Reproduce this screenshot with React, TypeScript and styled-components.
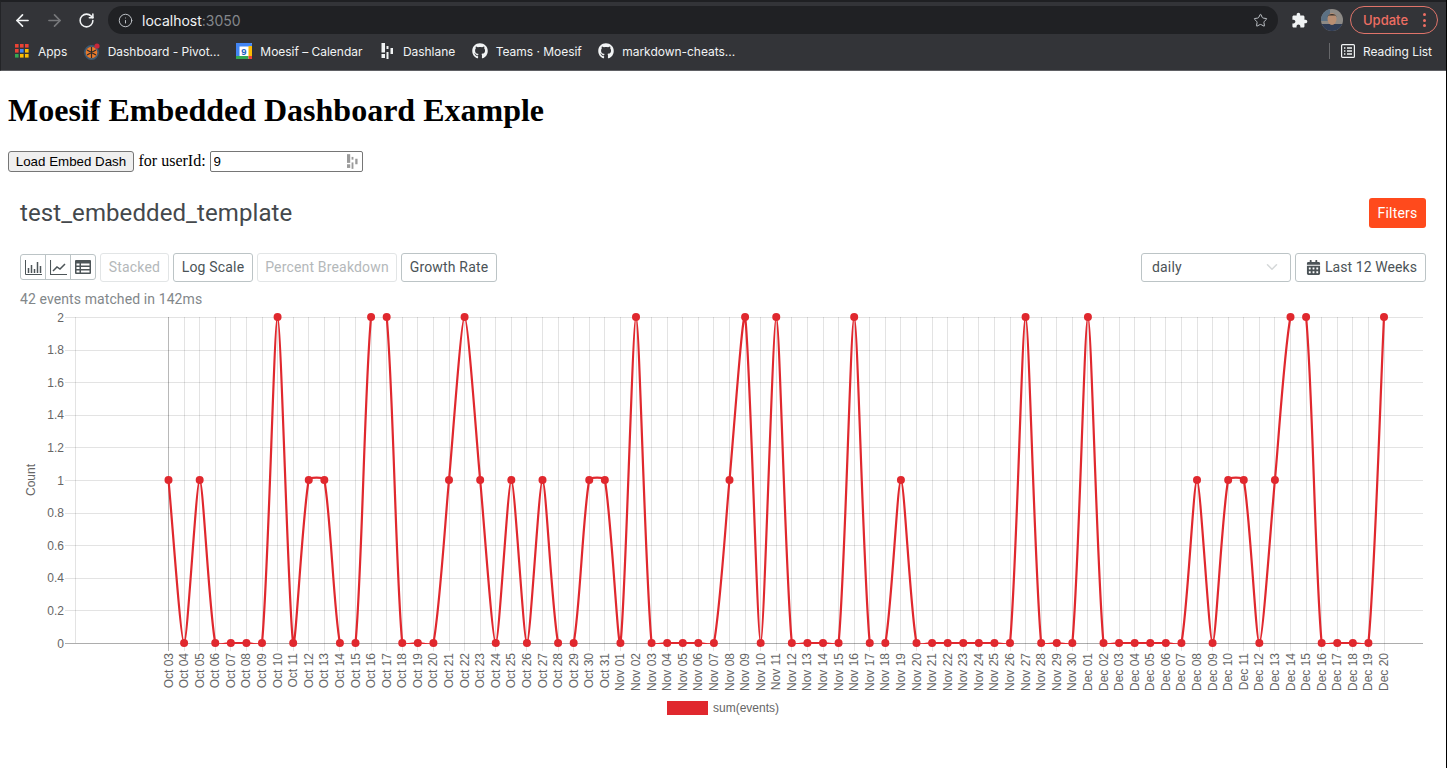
import React from 'react';
import styled, { createGlobalStyle } from 'styled-components';
import { ArrowLeft, ArrowRight, RotateCw, Info, Star, ChevronDown } from 'lucide-react';
import { FaGithub, FaCalendarAlt } from 'react-icons/fa';

const Global = createGlobalStyle`
  html, body { margin: 0; padding: 0; background: #fff; }
  #root { width: 1447px; height: 768px; overflow: hidden; }
`;

const Win = styled.div`
  width: 1447px;
  height: 768px;
  box-sizing: border-box;
  border-right: 1px solid #000;
  overflow: hidden;
`;

const Chrome = styled.header`
  height: 71px;
  box-sizing: border-box;
  background: #333438;
  border-top: 2px solid #1f2023;
  border-bottom: 1px solid #5f6064;
  border-left: 1px solid #232427;
  font-family: Inter, 'Liberation Sans', sans-serif;
  color: #f1f3f4;
`;

const Toolbar = styled.div`
  height: 32px;
  padding-top: 4px;
  box-sizing: border-box;
  display: flex;
  align-items: center;
  padding-left: 11px;
  padding-right: 8px;
`;

const NavBtn = styled.span<{ $dim?: boolean }>`
  width: 20px;
  height: 20px;
  margin-right: 12px;
  display: flex;
  align-items: center;
  justify-content: center;
  color: ${p => (p.$dim ? '#77787b' : '#f1f3f4')};
`;

const Omni = styled.div`
  width: 1170px;
  height: 28px;
  border-radius: 14px;
  background: #202124;
  display: flex;
  align-items: center;
  padding: 0 10px 0 10px;
  box-sizing: border-box;
  color: #bdc1c6;
`;

const Url = styled.span`
  margin-left: 9px;
  flex: 1;
  font-size: 14px;
  color: #f1f3f4;
  span { color: #84878b; }
`;

const Ext = styled.span`
  display: flex;
  align-items: center;
  justify-content: center;
  margin-left: 13px;
  width: 17px;
  color: #f1f3f4;
`;

const Avatar = styled.svg`
  margin-left: 13px;
  flex: none;
`;

const Update = styled.div`
  margin-left: 7px;
  width: 88px;
  height: 28px;
  box-sizing: border-box;
  border: 1.5px solid #e0746a;
  border-radius: 14px;
  display: flex;
  align-items: center;
  justify-content: space-between;
  padding: 0 11px 0 12px;
  color: #ee6e63;
  font-size: 13px;
  font-weight: 500;
`;

const Dots = styled.span`
  display: flex;
  flex-direction: column;
  gap: 2.5px;
  i { width: 3px; height: 3px; border-radius: 50%; background: #ee6e63; display: block; }
`;

const Bookmarks = styled.nav`
  height: 36px;
  display: flex;
  align-items: center;
  padding: 0 14px 2px 14px;
  box-sizing: border-box;
  gap: 16.5px;
`;

const Mark = styled.span`
  display: flex;
  align-items: center;
  gap: 8px;
  font-size: 12px;
  letter-spacing: -0.03px;
  white-space: nowrap;
`;

const DashlaneMark = styled.svg`
  margin: 0 1px 0 2px;
`;

const MarkGap = styled.span`
  flex: 1;
`;

const Sep = styled.span`
  width: 1px;
  height: 16px;
  background: #66676a;
  margin-right: -6px;
`;

const Page = styled.main`
  padding: 0 0 0 8px;
`;

const H1 = styled.h1`
  font-family: 'Liberation Serif', serif;
  font-size: 32px;
  font-weight: bold;
  margin: 21.44px 0;
  line-height: 37px;
  color: #000;
`;

const Form = styled.div`
  display: flex;
  align-items: center;
  font-family: 'Liberation Serif', serif;
  font-size: 16px;
  height: 21px;
  color: #000;
`;

const NativeBtn = styled.button`
  width: 126px;
  height: 21px;
  padding: 0;
  box-sizing: border-box;
  background: #efefef;
  border: 1px solid #767676;
  border-radius: 3px;
  font-family: 'Liberation Sans', sans-serif;
  font-size: 13.33px;
  color: #000;
`;

const Label = styled.span`
  margin: 0 4px 0 4.5px;
`;

const InputWrap = styled.span`
  position: relative;
  display: block;
  width: 153px;
  height: 21px;
`;

const TextInput = styled.input`
  width: 100%;
  height: 100%;
  box-sizing: border-box;
  border: 1px solid #767676;
  border-radius: 2px;
  padding: 1px 3px;
  font-family: 'Liberation Sans', sans-serif;
  font-size: 13.33px;
  color: #000;
`;

const InputBadge = styled.svg`
  position: absolute;
  right: 5px;
  top: 3px;
`;

const Dash = styled.section`
  padding: 0 20px 0 12px;
  font-family: Roboto, sans-serif;
`;

const Head = styled.div`
  height: 81px;
  display: flex;
  justify-content: space-between;
  align-items: flex-start;
  padding-top: 26px;
  box-sizing: border-box;
`;

const Title = styled.h2`
  margin: 0;
  font-size: 24px;
  font-weight: 400;
  line-height: 30px;
  letter-spacing: 0.09px;
  color: #44484c;
`;

const FiltersBtn = styled.button`
  width: 57px;
  height: 30px;
  border: 0;
  border-radius: 3px;
  background: #ff4a1c;
  color: #fff;
  font-family: Roboto, sans-serif;
  font-size: 14px;
  letter-spacing: 0.2px;
  padding: 0;
`;

const Controls = styled.div`
  display: flex;
  align-items: center;
  gap: 4px;
  height: 29px;
`;

const IconGroup = styled.div`
  display: flex;
  width: 76px;
  height: 26px;
  box-sizing: border-box;
  border: 1px solid #bcc4c6;
  border-radius: 3px;
`;

const IconCell = styled.span`
  flex: 1;
  display: flex;
  align-items: center;
  justify-content: center;
  color: #4d5558;
  & + & { border-left: 1px solid #bcc4c6; }
`;

const Toggle = styled.button<{ $w: number; $off?: boolean }>`
  width: ${p => p.$w}px;
  height: 29px;
  box-sizing: border-box;
  padding: 0;
  background: #fff;
  border: 1px solid ${p => (p.$off ? '#e2e5e6' : '#bcc4c6')};
  border-radius: 3px;
  font-family: Roboto, sans-serif;
  font-size: 14px;
  letter-spacing: 0.17px;
  color: ${p => (p.$off ? '#b4b8ba' : '#4b5357')};
`;

const Spacer = styled.span`
  flex: 1;
`;

const SelectBox = styled.div`
  width: 150px;
  height: 29px;
  box-sizing: border-box;
  border: 1px solid #bcc4c6;
  border-radius: 3px;
  display: flex;
  align-items: center;
  justify-content: space-between;
  padding: 0 9px 0 10px;
  font-size: 14px;
  letter-spacing: 0.17px;
  color: #4b5357;
`;

const DateBtn = styled.div`
  width: 131px;
  height: 29px;
  box-sizing: border-box;
  border: 1px solid #bcc4c6;
  border-radius: 3px;
  display: flex;
  align-items: center;
  gap: 4px;
  padding-left: 10px;
  font-size: 14px;
  letter-spacing: 0.08px;
  color: #4b5357;
`;

const Meta = styled.div`
  margin-top: 9px;
  font-size: 14px;
  line-height: 16px;
  letter-spacing: 0.1px;
  color: #82878a;
`;

const ChartSvg = styled.svg`
  display: block;
  font-family: 'Liberation Sans', sans-serif;
  font-size: 12px;
`;

const Tick = styled.text`
  fill: #666;
`;

const vals = [1,0,1,0,0,0,0,2,0,1,1,0,0,2,2,0,0,0,1,2,1,0,1,0,1,0,0,1,1,
  0,2,0,0,0,0,0,1,2,0,2,0,0,0,0,2,0,0,1,0,0,0,0,0,0,0,2,0,0,0,
  2,0,0,0,0,0,0,1,0,1,1,0,1,2,2,0,0,0,0,2];

const labels: string[] = [];
for (let d = 3; d <= 31; d++) labels.push('Oct ' + String(d).padStart(2, '0'));
for (let d = 1; d <= 30; d++) labels.push('Nov ' + String(d).padStart(2, '0'));
for (let d = 1; d <= 20; d++) labels.push('Dec ' + String(d).padStart(2, '0'));

const X0 = 168.5;
const DX = (1384 - 168.5) / 78;
const Y0 = 643;
const YH = 326;
const px = (i: number) => X0 + i * DX;
const py = (v: number) => Y0 - (v / 2) * YH;

const pts = labels.map((_, i) => ({ x: px(i), y: py(vals[i] ?? 0) }));

function splinePath() {
  const t = 0.22;
  const cps = pts.map((c, i) => {
    const p = pts[Math.max(i - 1, 0)];
    const n = pts[Math.min(i + 1, pts.length - 1)];
    const d01 = Math.hypot(c.x - p.x, c.y - p.y);
    const d12 = Math.hypot(n.x - c.x, n.y - c.y);
    const tot = d01 + d12 || 1;
    const fa = (t * d01) / tot;
    const fb = (t * d12) / tot;
    return {
      ax: c.x - fa * (n.x - p.x), ay: c.y - fa * (n.y - p.y),
      bx: c.x + fb * (n.x - p.x), by: c.y + fb * (n.y - p.y),
    };
  });
  let s = `M${pts[0].x} ${pts[0].y}`;
  for (let i = 1; i < pts.length; i++) {
    s += `C${cps[i - 1].bx} ${cps[i - 1].by} ${cps[i].ax} ${cps[i].ay} ${pts[i].x} ${pts[i].y}`;
  }
  return s;
}

const yTicks = [2, 1.8, 1.6, 1.4, 1.2, 1, 0.8, 0.6, 0.4, 0.2, 0];

const Chart = () => (
  <ChartSvg width={1406} height={420} viewBox="20 307 1406 420">
    <defs>
      <clipPath id="area"><rect x={76} y={316} width={1348} height={328} /></clipPath>
    </defs>
    {labels.map((_, i) => (
      <line key={i} x1={Math.floor(px(i)) + 0.5} x2={Math.floor(px(i)) + 0.5} y1={317} y2={651}
        stroke={i === 0 ? 'rgba(0,0,0,0.28)' : 'rgba(0,0,0,0.11)'} />
    ))}
    <line x1={75.5} x2={75.5} y1={317} y2={643} stroke="rgba(0,0,0,0.11)" />
    {yTicks.map(v => (
      <g key={v}>
        <line x1={65} x2={1423} y1={Math.round(py(v)) + 0.5} y2={Math.round(py(v)) + 0.5}
          stroke={v === 0 ? 'rgba(0,0,0,0.32)' : 'rgba(0,0,0,0.11)'} />
        <Tick x={64} y={py(v) + 4.5} textAnchor="end">{v}</Tick>
      </g>
    ))}
    <Tick x={0} y={0} textAnchor="middle" transform="translate(35 480) rotate(-90)">Count</Tick>
    {labels.map((l, i) => (
      <Tick key={l} x={0} y={0} textAnchor="end" transform={`translate(${px(i) + 4} 653) rotate(-90)`}>{l}</Tick>
    ))}
    <path d={splinePath()} fill="none" stroke="#e0282e" strokeWidth={2.2} clipPath="url(#area)" />
    {pts.map((p, i) => <circle key={i} cx={p.x} cy={p.y} r={4} fill="#e0282e" />)}
    <rect x={667} y={701} width={41} height={14} fill="#e0282e" />
    <Tick x={713} y={711.5}>sum(events)</Tick>
  </ChartSvg>
);

const AppsIcon = () => {
  const c = ['#ea4335','#ea4335','#ea4335','#ea4335','#4285f4','#fbbc04','#34a853','#fbbc04','#fbbc04'];
  return (
    <svg width="15" height="14" viewBox="0 0 15 14">
      {c.map((f, i) => <rect key={i} x={(i % 3) * 5} y={Math.floor(i / 3) * 5} width="3.6" height="3.6" fill={f} />)}
    </svg>
  );
};

const PivotIcon = () => (
  <svg width="16" height="17" viewBox="0 0 16 17">
    <circle cx="7.5" cy="9.5" r="6.6" fill="#e8792b" stroke="#3d5a73" strokeWidth="1.6" />
    <path d="M7.5 9.5L7.5 4M7.5 9.5L12 7M7.5 9.5L12 12M7.5 9.5L7.5 15M7.5 9.5L3 12M7.5 9.5L3 7" stroke="#2b2b2b" strokeWidth="1.2" />
    <circle cx="13" cy="3" r="2.6" fill="#c8263a" />
  </svg>
);

const CalIcon = () => (
  <svg width="16" height="16" viewBox="0 0 16 16">
    <rect width="16" height="16" rx="1" fill="#fff" />
    <path d="M0 1a1 1 0 0 1 1-1h14a1 1 0 0 1 1 1v2.5H0z" fill="#4285f4" />
    <rect width="3.5" height="13" fill="#4285f4" />
    <rect x="12.5" y="3" width="3.5" height="10" fill="#fbbc04" />
    <rect y="13" width="12.5" height="3" fill="#34a853" />
    <rect x="12.5" y="13" width="3.5" height="3" fill="#ea4335" />
    <text x="8" y="12" textAnchor="middle" fontSize="9.5" fontWeight="700" fontFamily="'Liberation Sans', sans-serif" fill="#1a5fc0">9</text>
  </svg>
);

const DashlaneGlyph = ({ fill }: { fill: string }) => (
  <>
    <rect x="0" y="0" width="3.5" height="9.5" fill={fill} />
    <rect x="0" y="11" width="3.5" height="4" fill={fill} />
    <rect x="5" y="3" width="2" height="3" fill={fill} />
    <rect x="5" y="9" width="2" height="7" fill={fill} />
    <rect x="9" y="5" width="2.5" height="6" fill={fill} />
  </>
);

const ReadingIcon = () => (
  <svg width="14" height="14" viewBox="0 0 14 14" fill="none" stroke="#f1f3f4">
    <rect x="0.6" y="0.6" width="12.8" height="12.8" rx="1" strokeWidth="1.2" />
    <path d="M3 4h1.4M6 4h5M3 7h1.4M6 7h5M3 10h1.4M6 10h5" strokeWidth="1.3" />
  </svg>
);

const ExtensionIcon = () => (
  <svg width="17" height="17" viewBox="0 0 24 24" fill="currentColor">
    <path d="M20.5 11H19V7c0-1.1-.9-2-2-2h-4V3.5C13 2.12 11.88 1 10.5 1S8 2.12 8 3.5V5H4c-1.1 0-1.99.9-1.99 2v3.8H3.5c1.49 0 2.7 1.21 2.7 2.7s-1.21 2.7-2.7 2.7H2V20c0 1.1.9 2 2 2h3.8v-1.5c0-1.49 1.21-2.7 2.7-2.7 1.49 0 2.7 1.21 2.7 2.7V22H17c1.1 0 2-.9 2-2v-4h1.5c1.38 0 2.5-1.12 2.5-2.5S21.88 11 20.5 11z" />
  </svg>
);

const BarsIcon = () => (
  <svg width="17" height="15" viewBox="0 0 17 15" fill="none" stroke="currentColor" strokeWidth="1">
    <path d="M.5 0v14.5H17" />
    <path d="M3.5 8v5M6.5 5v8M9.5 9v4M12.5 2v11M15.5 6v7" strokeWidth="1.5" />
  </svg>
);

const LineIcon = () => (
  <svg width="17" height="15" viewBox="0 0 17 15" fill="none" stroke="currentColor" strokeWidth="1.1">
    <path d="M.5 0v14.5H17" />
    <path d="M3 11l4-4 3 2 5-5" strokeWidth="1.5" />
  </svg>
);

const TableIcon = () => (
  <svg width="16" height="14" viewBox="0 0 16 14">
    <path fill="currentColor" d="M0 1a1 1 0 0 1 1-1h14a1 1 0 0 1 1 1v12a1 1 0 0 1-1 1H1a1 1 0 0 1-1-1zM1.5 3.5V5.5H4.5V3.5zM6 3.5V5.5H14.5V3.5zM1.5 7V9H4.5V7zM6 7V9H14.5V7zM1.5 10.5V12.5H4.5V10.5zM6 10.5V12.5H14.5V10.5z" fillRule="evenodd" />
  </svg>
);

export default function App() {
  return (
    <Win>
      <Global />
      <Chrome>
        <Toolbar>
          <NavBtn><ArrowLeft size={19} strokeWidth={2.1} /></NavBtn>
          <NavBtn $dim><ArrowRight size={19} strokeWidth={2.1} /></NavBtn>
          <NavBtn><RotateCw size={17} strokeWidth={2.2} /></NavBtn>
          <Omni>
            <Info size={15} strokeWidth={1.6} />
            <Url>localhost<span>:3050</span></Url>
            <Star size={15} strokeWidth={1.6} />
          </Omni>
          <Ext><ExtensionIcon /></Ext>
          <Avatar width="22" height="22" viewBox="0 0 22 22">
            <clipPath id="av"><circle cx="11" cy="11" r="11" /></clipPath>
            <g clipPath="url(#av)">
              <rect width="22" height="22" fill="#8d8a86" />
              <rect width="9" height="12" fill="#5c7184" />
              <rect y="15" width="22" height="7" fill="#2f3c55" />
              <ellipse cx="11" cy="10" rx="4.5" ry="6" fill="#b88e72" />
              <path d="M6.5 8c0-4 9-4 9 0l-1-1.5h-7z" fill="#3a332d" />
            </g>
          </Avatar>
          <Update>Update<Dots><i /><i /><i /></Dots></Update>
        </Toolbar>
        <Bookmarks>
          <Mark><AppsIcon />Apps</Mark>
          <Mark><PivotIcon />Dashboard - Pivot...</Mark>
          <Mark><CalIcon />Moesif – Calendar</Mark>
          <Mark>
            <DashlaneMark width="13" height="16" viewBox="0 0 12 16"><DashlaneGlyph fill="#f1f3f4" /></DashlaneMark>
            Dashlane
          </Mark>
          <Mark><FaGithub size={16} />Teams · Moesif</Mark>
          <Mark><FaGithub size={16} />markdown-cheats...</Mark>
          <MarkGap />
          <Sep />
          <Mark><ReadingIcon />Reading List</Mark>
        </Bookmarks>
      </Chrome>
      <Page>
        <H1>Moesif Embedded Dashboard Example</H1>
        <Form>
          <NativeBtn>Load Embed Dash</NativeBtn>
          <Label>for userId:</Label>
          <InputWrap>
            <TextInput defaultValue="9" />
            <InputBadge width="11" height="15" viewBox="0 0 12 16"><DashlaneGlyph fill="#9a9a9a" /></InputBadge>
          </InputWrap>
        </Form>
        <Dash>
          <Head>
            <Title>test_embedded_template</Title>
            <FiltersBtn>Filters</FiltersBtn>
          </Head>
          <Controls>
            <IconGroup>
              <IconCell><BarsIcon /></IconCell>
              <IconCell><LineIcon /></IconCell>
              <IconCell><TableIcon /></IconCell>
            </IconGroup>
            <Toggle $w={69} $off>Stacked</Toggle>
            <Toggle $w={80}>Log Scale</Toggle>
            <Toggle $w={140} $off>Percent Breakdown</Toggle>
            <Toggle $w={96}>Growth Rate</Toggle>
            <Spacer />
            <SelectBox>daily<ChevronDown size={18} color="#d5d8d9" strokeWidth={2} /></SelectBox>
            <DateBtn><FaCalendarAlt size={15} />Last 12 Weeks</DateBtn>
          </Controls>
          <Meta>42 events matched in 142ms</Meta>
          <Chart />
        </Dash>
      </Page>
    </Win>
  );
}
